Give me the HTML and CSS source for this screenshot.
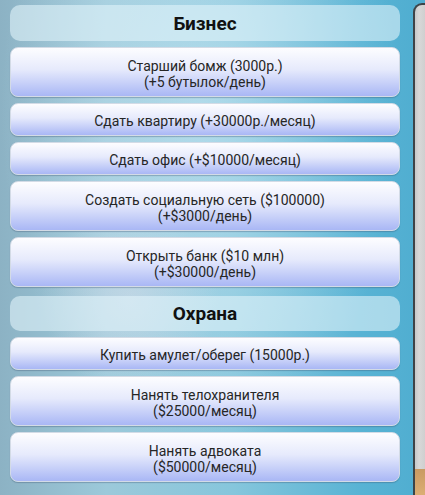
FILE: index.html
```html
<!DOCTYPE html>
<html lang="ru">
<head>
<meta charset="utf-8">
<link rel="stylesheet" href="styles.css">
</head>
<body>
<div class="screen">
  <div class="list">
    <div class="header">Бизнес</div>
    <div class="btn two">Старший бомж (3000р.)<br>(+5 бутылок/день)</div>
    <div class="btn">Сдать квартиру (+30000р./месяц)</div>
    <div class="btn">Сдать офис (+$10000/месяц)</div>
    <div class="btn two">Создать социальную сеть ($100000)<br>(+$3000/день)</div>
    <div class="btn two">Открыть банк ($10 млн)<br>(+$30000/день)</div>
    <div class="header second">Охрана</div>
    <div class="btn">Купить амулет/оберег (15000р.)</div>
    <div class="btn two">Нанять телохранителя<br>($25000/месяц)</div>
    <div class="btn two">Нанять адвоката<br>($50000/месяц)</div>
  </div>
  <div class="side">
    <div class="side-pic"></div>
  </div>
</div>
</body>
</html>
```
FILE: styles.css
```css
* { box-sizing: border-box; }
html, body {
  margin: 0;
  padding: 0;
  width: 425px;
  height: 495px;
  overflow: hidden;
}
body {
  font-family: Roboto, "Liberation Sans", sans-serif;
  color: #222;
}
.screen {
  display: flex;
  width: 425px;
  height: 495px;
  background:
    radial-gradient(circle at 130px 300px, rgba(255,230,240,0.3) 0, rgba(255,230,240,0) 90px),
    radial-gradient(ellipse at 200px 110px, rgba(215,238,248,0.5) 0, rgba(215,238,248,0) 200px),
    linear-gradient(90deg, #8cb2c4 0%, #9cc9da 25%, #86c6dc 55%, #58b3d4 85%, #4fadd0 100%);
}
.list {
  width: 413px;
  padding: 5px 13px 0 10px;
  display: flex;
  flex-direction: column;
  gap: 6px;
}
.header {
  height: 36px;
  border-radius: 10px;
  background: rgba(225, 243, 250, 0.6);
  display: flex;
  align-items: center;
  justify-content: center;
  font-weight: bold;
  font-size: 19px;
  color: #111;
}
.header.second {
  margin-top: 3px;
  height: 35px;
}
.btn {
  min-height: 33px;
  border-radius: 8px;
  background: linear-gradient(180deg, #fdfdff 0%, #e6eafc 45%, #a9b7f5 100%);
  border: 1px solid #d3dbe6;
  box-shadow: 0 1px 1px rgba(60, 80, 110, 0.35);
  display: flex;
  align-items: center;
  justify-content: center;
  text-align: center;
  font-size: 14px;
  line-height: 16px;
  padding: 3px 8px 0;
  color: #262626;
}
.btn.two {
  min-height: 50px;
}
.side {
  flex: 1;
  margin-top: 3px;
  border-left: 2px solid #3d4448;
  border-top: 2px solid #3d4448;
  border-top-left-radius: 9px;
  background: linear-gradient(90deg, #c6c8c9 0%, #d8d8d8 40%, #cfcfcf 100%);
  display: flex;
  flex-direction: column;
  justify-content: flex-end;
}
.side-pic {
  height: 26px;
  background: linear-gradient(180deg, #c99a62 0%, #dcae74 100%);
}
```
